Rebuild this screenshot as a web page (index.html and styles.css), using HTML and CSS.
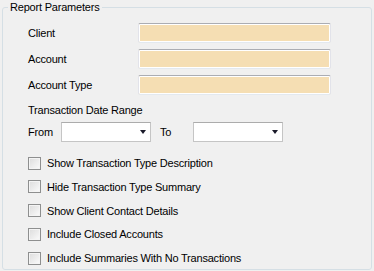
FILE: index.html
```html
<!DOCTYPE html>
<html lang="en">
<head>
  <meta charset="UTF-8">
  <title>Report Parameters</title>
  <link rel="stylesheet" href="styles.css">
</head>
<body>

<fieldset class="group">
  <legend>Report Parameters</legend>
  <div class="content">

    <div class="fields">
      <label for="client">Client</label>
      <input type="text" id="client" class="textbox">
      <label for="account">Account</label>
      <input type="text" id="account" class="textbox">
      <label for="accountType">Account Type</label>
      <input type="text" id="accountType" class="textbox">
    </div>

    <div class="range-title">Transaction Date Range</div>
    <div class="range">
      <span class="range-from">From</span>
      <div class="combo"><span class="arrow"></span></div>
      <span class="range-to">To</span>
      <div class="combo"><span class="arrow"></span></div>
    </div>

    <div class="options">
      <label class="check"><input type="checkbox"> Show Transaction Type Description</label>
      <label class="check"><input type="checkbox"> Hide Transaction Type Summary</label>
      <label class="check"><input type="checkbox"> Show Client Contact Details</label>
      <label class="check"><input type="checkbox"> Include Closed Accounts</label>
      <label class="check"><input type="checkbox"> Include Summaries With No Transactions</label>
    </div>

  </div>
</fieldset>

</body>
</html>
```

FILE: styles.css
```css
body {
  margin: 0;
  background: #f0f0f0;
  font-family: "Liberation Sans", Arial, sans-serif;
  font-size: 11px;
  letter-spacing: -0.2px;
  color: #000;
}
.group {
  box-sizing: border-box;
  height: 269px;
  margin: 1px 2px 0 2px;
  padding: 0;
  border: 1px solid #d5dfe5;
  border-radius: 3px;
  min-width: 0;
}
.group legend {
  margin-left: 5px;
  padding: 0 2px;
  line-height: 13px;
}
.content {
  padding-left: 25px;
}
.fields {
  display: grid;
  grid-template-columns: 110px 193px;
  grid-auto-rows: 20px;
  row-gap: 6px;
  align-items: center;
  margin-top: 9px;
}
.textbox {
  box-sizing: border-box;
  height: 20px;
  width: 193px;
  margin: 0;
  border: 1px solid #e2e3ea;
  border-top-color: #abadb3;
  border-bottom-color: #e3e9ef;
  border-radius: 2px;
  background: #f5deb3;
  box-shadow: inset 0 0 0 1px #fff;
  outline: none;
}
.range-title {
  margin-top: 9px;
  line-height: 13px;
}
.range {
  display: flex;
  align-items: center;
  height: 20px;
  margin-top: 5px;
}
.range-from {
  width: 33px;
}
.range-to {
  width: 33px;
  margin-left: 9px;
}
.combo {
  box-sizing: border-box;
  position: relative;
  width: 90px;
  height: 20px;
  background: #fff;
  border: 1px solid #c5c5c5;
  border-top-color: #acacac;
}
.combo .arrow {
  position: absolute;
  right: 4px;
  top: 7px;
  width: 0;
  height: 0;
  border-left: 3.5px solid transparent;
  border-right: 3.5px solid transparent;
  border-top: 4px solid #1a1a2a;
}
.options {
  display: flex;
  flex-direction: column;
  gap: 3.75px;
  margin-top: 11px;
}
.check {
  display: flex;
  align-items: center;
  height: 20px;
}
.check input {
  appearance: none;
  box-sizing: border-box;
  width: 13px;
  height: 13px;
  margin: 0 6px 0 0;
  border: 1px solid #8e8f8f;
  background: linear-gradient(135deg, #dcdcdc, #fbfbfb);
  box-shadow: inset 0 0 0 1px #f4f4f4;
}
```
